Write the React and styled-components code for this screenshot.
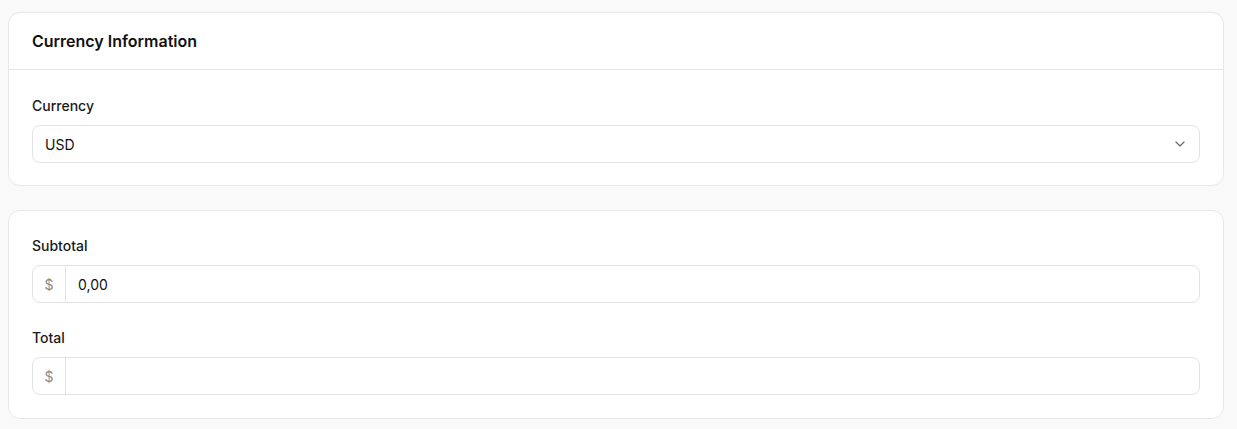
import styled, { createGlobalStyle } from 'styled-components';

const GlobalStyle = createGlobalStyle`
  * { box-sizing: border-box; }
  body {
    margin: 0;
    background: #f9f9f9;
    font-family: Inter, "Noto Sans", sans-serif;
    color: #111111;
  }
`;

export default function App() {
  return (
    <Page>
      <GlobalStyle />
      <Card>
        <CardHeader>
          <Title>Currency Information</Title>
        </CardHeader>
        <CardBody $afterHeader>
          <Field>
            <Label>Currency</Label>
            <Select>
              <span>USD</span>
              <svg width="16" height="16" viewBox="0 0 24 24" fill="none" stroke="#6b6f76" strokeWidth="2" strokeLinecap="round" strokeLinejoin="round">
                <path d="m6 9 6 6 6-6" />
              </svg>
            </Select>
          </Field>
        </CardBody>
      </Card>

      <Card>
        <CardBody>
          <Field>
            <Label>Subtotal</Label>
            <InputGroup>
              <Addon>$</Addon>
              <Input defaultValue="0,00" />
            </InputGroup>
          </Field>
          <Field>
            <Label>Total</Label>
            <InputGroup>
              <Addon>$</Addon>
              <Input defaultValue="" />
            </InputGroup>
          </Field>
        </CardBody>
      </Card>
    </Page>
  );
}

const Page = styled.div`
  display: flex;
  flex-direction: column;
  gap: 24px;
  width: 1224px;
  padding: 12px 0 0 8px;
`;

const Card = styled.div`
  background: #ffffff;
  border: 1px solid #e8e8e8;
  border-radius: 12px;
`;

const CardHeader = styled.div`
  height: 57px;
  padding: 16px 23px;
  border-bottom: 1px solid #e6e6e6;
`;

const Title = styled.h2`
  margin: 0;
  font-size: 16px;
  line-height: 24px;
  font-weight: 600;
  color: #111111;
`;

const CardBody = styled.div`
  display: flex;
  flex-direction: column;
  gap: 25px;
  padding: ${(p) => (p.$afterHeader ? '26px 23px 22px' : '25px 23px 23px')};
`;

const Field = styled.div`
  display: flex;
  flex-direction: column;
  gap: 9px;
`;

const Label = styled.label`
  font-size: 14px;
  line-height: 20px;
  font-weight: 500;
  color: #1a1a1a;
`;

const Select = styled.div`
  display: flex;
  align-items: center;
  justify-content: space-between;
  height: 38px;
  padding: 0 11px 0 12px;
  border: 1px solid #e3e3e3;
  border-radius: 8px;
  background: #ffffff;
  font-size: 14px;
  color: #111111;
`;

const InputGroup = styled.div`
  display: flex;
  height: 38px;
  border: 1px solid #e3e3e3;
  border-radius: 8px;
  background: #ffffff;
  overflow: hidden;
`;

const Addon = styled.span`
  display: flex;
  align-items: center;
  justify-content: center;
  width: 33px;
  border-right: 1px solid #e3e3e3;
  font-size: 14px;
  color: #8a8a8a;
`;

const Input = styled.input`
  flex: 1;
  border: none;
  outline: none;
  padding: 0 12px;
  font-family: inherit;
  font-size: 14px;
  color: #111111;
  background: transparent;
`;
